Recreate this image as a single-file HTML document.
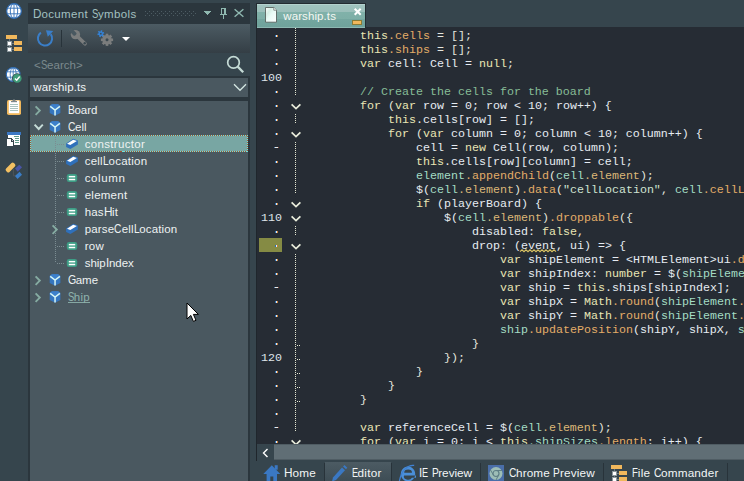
<!DOCTYPE html>
<html>
<head>
<meta charset="utf-8">
<title>warship.ts</title>
<style>
html,body{margin:0;padding:0;}
body{width:744px;height:481px;overflow:hidden;background:#36454d;position:relative;font-family:"Liberation Sans",sans-serif;font-size:11.5px;color:#e8eef0;}
.abs{position:absolute;}
svg{position:absolute;overflow:visible;}
/* left panel */
#title{left:28px;top:3px;width:222px;height:21px;background:#2b363d;}
#title .t{left:5px;top:4px;color:#a3c0c0;font-size:11.5px;line-height:14px;white-space:nowrap;}
#toolbar{left:28px;top:24px;width:222px;height:29px;background:linear-gradient(#4c5b63,#343e45);}
#search{left:34px;top:58px;color:#7c8a8d;font-size:11.5px;line-height:14px;white-space:nowrap;}
#combo{left:28px;top:76px;width:218px;height:19px;border:2px solid #2b363d;background:#4a5860;}
#combo .t{left:3.3px;top:2px;line-height:14px;color:#f2f5f5;white-space:nowrap;}
#tree{left:28px;top:99px;width:218px;height:390px;border:2px solid #2b363d;background:#4a5860;}
.row{position:absolute;left:0;width:218px;height:17px;}
.row .lbl{position:absolute;top:2px;line-height:15px;white-space:nowrap;color:#eef2f2;}
.sel{background:#78a6a3;}
.C{display:inline-block;font-size:12.4px;letter-spacing:0;}
.C>i{display:inline-block;font-style:normal;transform-origin:0 50%;}
/* editor */
#ed{left:257px;top:27px;width:487px;height:417px;background:#262c34;overflow:hidden;}
#edl{left:256px;top:27px;width:1px;height:434px;background:#1f262c;}
.ln{position:absolute;left:0;height:14px;line-height:14px;white-space:pre;font-family:"Liberation Mono",monospace;font-size:11.667px;color:#e4e6df;}
.num{position:absolute;left:4px;height:14px;line-height:14px;white-space:pre;font-family:"Liberation Mono",monospace;font-size:11.667px;color:#dfe5ea;}
.k{color:#e9e6b5;} /* keyword */
.m{color:#e3ad68;} /* member */
.p{color:#dcb878;}
.v{color:#a4dcc4;} /* variable */
.c{color:#86bd97;} /* comment */
.s{color:#cfe3d2;} /* string */
.w{color:#e6ecf2;}
.u{color:#e6ecf2;}
.dot{position:absolute;left:18px;width:3px;height:2px;background:linear-gradient(90deg,#2d6fb3 0,#2d6fb3 1px,#e4eaee 1px,#e4eaee 2px,#c97d35 2px);}
.dash{position:absolute;left:17px;width:5px;height:1px;background:linear-gradient(90deg,#5a86b8 0,#5a86b8 1px,#e9edea 1px,#e9edea 4px,#8c4a3a 4px);}
/* bottom */
#hs{left:257px;top:444px;width:487px;height:16px;background:#4f5c63;}
#hsb{left:257px;top:444px;width:17px;height:16px;background:#36454d;}
#tabs{left:257px;top:461px;width:487px;height:20px;background:#36454d;}
.bt{position:absolute;top:5px;line-height:14px;font-size:11.75px;color:#f2f5f5;white-space:nowrap;}
.sep{position:absolute;top:463px;width:1px;height:18px;background:#28333a;}
</style>
</head>
<body>
<svg width="16" height="16" style="left:6px;top:3px" viewBox="0 0 16 16">
<circle cx="8" cy="8" r="7.3" fill="#ffffff" stroke="#2f6db5" stroke-width="1.2"/>
<ellipse cx="8" cy="8" rx="3.7" ry="7.3" fill="none" stroke="#2f6db5" stroke-width="0.9"/>
<line x1="8" y1="0.8" x2="8" y2="15.2" stroke="#2f6db5" stroke-width="0.9"/>
<line x1="1.6" y1="5.2" x2="14.4" y2="5.2" stroke="#2f6db5" stroke-width="0.9"/>
<line x1="1.6" y1="10.8" x2="14.4" y2="10.8" stroke="#2f6db5" stroke-width="0.9"/>
</svg>
<svg width="24" height="20" style="left:0;top:32px" shape-rendering="crispEdges">
<path d="M9.5 7v13M9.5 11.5h5M9.5 17.5h5" stroke="#6d7a80" stroke-width="1" fill="none"/>
<rect x="6" y="3" width="11" height="4" fill="#f1b85c"/>
<rect x="14" y="9" width="8" height="4" fill="#f1b85c"/>
<rect x="14" y="15" width="8" height="4" fill="#f1b85c"/>
<rect x="7.5" y="9.5" width="4" height="4" fill="#ffffff" stroke="#8c989d"/>
<rect x="7.5" y="15.5" width="4" height="4" fill="#ffffff" stroke="#8c989d"/>
</svg>
<svg width="18" height="18" style="left:5px;top:66px" viewBox="0 0 18 18">
<circle cx="8.2" cy="8.5" r="6.9" fill="#ffffff" stroke="#2f6db5" stroke-width="1.1"/>
<ellipse cx="8.2" cy="8.5" rx="3" ry="6.9" fill="none" stroke="#2f6db5" stroke-width="0.8"/>
<line x1="8.2" y1="1.6" x2="8.2" y2="15.4" stroke="#2f6db5" stroke-width="0.8"/>
<line x1="2" y1="5.8" x2="14.4" y2="5.8" stroke="#2f6db5" stroke-width="0.8"/>
<line x1="2" y1="11.2" x2="14.4" y2="11.2" stroke="#2f6db5" stroke-width="0.8"/>
<circle cx="12.2" cy="12.4" r="5.2" fill="#36454d"/>
<circle cx="12.2" cy="12.4" r="4.4" fill="#3f9b78"/>
<polyline points="9.9,12.4 11.7,14.2 14.7,10.5" fill="none" stroke="#ffffff" stroke-width="1.4"/>
</svg>
<svg width="16" height="18" style="left:6px;top:98px" viewBox="0 0 16 18">
<rect x="1" y="2" width="14" height="15" rx="1.8" fill="#f1b85c"/>
<rect x="2.8" y="2.6" width="10.4" height="12.6" fill="#ffffff"/>
<path d="M5.3 3.8 L8 1 L10.7 3.8z" fill="#7d8587"/>
<rect x="5" y="3" width="6" height="1.2" fill="#7d8587"/>
<path d="M4 6.5h8M4 8.5h8M4 10.5h8M4 12.5h8" stroke="#a9c3bf" stroke-width="1"/>
</svg>
<svg width="18" height="18" style="left:5px;top:130px" viewBox="0 0 18 18" shape-rendering="crispEdges">
<rect x="2" y="2" width="14" height="3" fill="#3b78c4"/>
<rect x="3" y="5" width="12" height="10" fill="#ffffff"/>
<path d="M9 6.5h5M10 8.5h4M10 10.5h4M10 12.5h4" stroke="#5f9a8a" stroke-width="1"/>
<path d="M1.5 8.5h5l2 2v6h-7z" fill="#ffffff" stroke="#36454d" stroke-width="1"/>
<path d="M6 8.5v2.5h2.5" fill="#c8d2d2" stroke="#36454d" stroke-width="1"/>
</svg>
<svg width="24" height="20" style="left:0;top:160px" viewBox="0 0 24 20">
<path d="M13.4 9 V15.8 H15.6" fill="none" stroke="#4f5358" stroke-width="1"/>
<rect x="5" y="5.1" width="11" height="4.8" rx="1.7" transform="rotate(-45 10.5 7.5)" fill="#f3c062"/>
<path d="M15 8.5 L19.3 4.75 L22 7.25 L17.7 11.8z" fill="#4a55a6"/>
<path d="M15 16 L19.6 11.8 L22 14.75 L17.5 18.9z" fill="#3a7dc6"/>
</svg>
<div id="title" class="abs"><div class="t abs" style="letter-spacing:0.366px"><span class="C" style="width:8.41px"><i style="transform:scaleX(0.94)">D</i></span>ocument <span class="C" style="width:6.37px"><i style="transform:scaleX(0.77)">S</i></span>ymbols</div>
<svg width="222" height="21" style="left:0;top:0" shape-rendering="crispEdges"><g fill="#4d5c63"><rect x="117" y="8" width="1" height="1"/><rect x="121" y="8" width="1" height="1"/><rect x="125" y="8" width="1" height="1"/><rect x="129" y="8" width="1" height="1"/><rect x="133" y="8" width="1" height="1"/><rect x="137" y="8" width="1" height="1"/><rect x="141" y="8" width="1" height="1"/><rect x="145" y="8" width="1" height="1"/><rect x="149" y="8" width="1" height="1"/><rect x="153" y="8" width="1" height="1"/><rect x="157" y="8" width="1" height="1"/><rect x="161" y="8" width="1" height="1"/><rect x="165" y="8" width="1" height="1"/><rect x="119" y="10" width="1" height="1"/><rect x="123" y="10" width="1" height="1"/><rect x="127" y="10" width="1" height="1"/><rect x="131" y="10" width="1" height="1"/><rect x="135" y="10" width="1" height="1"/><rect x="139" y="10" width="1" height="1"/><rect x="143" y="10" width="1" height="1"/><rect x="147" y="10" width="1" height="1"/><rect x="151" y="10" width="1" height="1"/><rect x="155" y="10" width="1" height="1"/><rect x="159" y="10" width="1" height="1"/><rect x="163" y="10" width="1" height="1"/><rect x="167" y="10" width="1" height="1"/><rect x="117" y="12" width="1" height="1"/><rect x="121" y="12" width="1" height="1"/><rect x="125" y="12" width="1" height="1"/><rect x="129" y="12" width="1" height="1"/><rect x="133" y="12" width="1" height="1"/><rect x="137" y="12" width="1" height="1"/><rect x="141" y="12" width="1" height="1"/><rect x="145" y="12" width="1" height="1"/><rect x="149" y="12" width="1" height="1"/><rect x="153" y="12" width="1" height="1"/><rect x="157" y="12" width="1" height="1"/><rect x="161" y="12" width="1" height="1"/><rect x="165" y="12" width="1" height="1"/></g><path d="M175 8h8l-4 4z" fill="#8fb8b0"/><path d="M193.5 5v6M193 5.5h5M192 11.5h7M195.5 12v4" stroke="#8fb8b0" stroke-width="1" fill="none"/><rect x="196" y="5" width="2" height="6" fill="#8fb8b0"/></svg>
<svg width="222" height="21" style="left:0;top:0"><path d="M206.6 6.2l8.8 7.6M215.4 6.2l-8.8 7.6" stroke="#8fb8b0" stroke-width="1.4" fill="none"/></svg>
</div>
<div id="toolbar" class="abs">
<svg width="222" height="29" style="left:0;top:0">
<path d="M12.9 8.6 A7.1 7.1 0 1 0 22.7 10.1" fill="none" stroke="#3a7ec8" stroke-width="2"/>
<path d="M18 6.2 L25.3 7 L19.8 12.7z" fill="#3a7ec8"/>
<rect x="33" y="6" width="1" height="17" fill="#28333a"/>
<g fill="#7b7d7d" stroke="#7b7d7d">
<line x1="48.5" y1="11.5" x2="57" y2="19.8" stroke-width="3.6" stroke-linecap="round"/>
<circle cx="47.4" cy="10.6" r="4.7" stroke="none"/>
</g>
<rect x="39" y="8.7" width="8.8" height="3.8" rx="1.2" fill="#495860" transform="rotate(45 47.4 10.6)"/>
<circle cx="56.7" cy="19.3" r="1.2" fill="#39474f"/>
<g transform="translate(79 15.8)" fill="#7b7d7d">
<circle r="4.8"/>
<g><rect x="-1.3" y="-6.1" width="2.6" height="12.2"/><rect x="-6.1" y="-1.3" width="12.2" height="2.6"/>
<rect x="-1.3" y="-6.1" width="2.6" height="12.2" transform="rotate(45)"/><rect x="-1.3" y="-6.1" width="2.6" height="12.2" transform="rotate(-45)"/></g>
<circle r="1.5" fill="#3c4a51"/>
</g>
<g transform="translate(72.8 9.7)" fill="#3482d6">
<circle r="2.2"/>
<rect x="-0.8" y="-3.4" width="1.6" height="6.8" transform="rotate(15)"/><rect x="-0.8" y="-3.4" width="1.6" height="6.8" transform="rotate(75)"/><rect x="-0.8" y="-3.4" width="1.6" height="6.8" transform="rotate(135)"/>
<circle r="0.9" fill="#3f4e56"/>
</g>
<path d="M94 13h8l-4 4z" fill="#ffffff"/>
</svg>
</div>
<div id="search" class="abs" style="letter-spacing:0.005px">&lt;<span class="C" style="width:6.37px"><i style="transform:scaleX(0.77)">S</i></span>earch&gt;</div>
<svg width="22" height="22" style="left:225px;top:54px"><circle cx="8.5" cy="8.4" r="5.8" fill="none" stroke="#c5dbd6" stroke-width="1.7"/><path d="M12.7 12.6 L18.2 18.2" stroke="#c5dbd6" stroke-width="2.3" fill="none"/></svg>
<div id="combo" class="abs"><div class="t abs" style="letter-spacing:0.102px">warship.ts</div><svg width="16" height="18" style="left:200px;top:0"><polyline points="4,6.3 10,12.3 16,6.3" fill="none" stroke="#d4e6e2" stroke-width="1.3"/></svg></div>
<div id="tree" class="abs">
<div class="row" style="top:0px"><div class="lbl" style="left:37.5px;letter-spacing:0.023px"><span class="C" style="width:6.88px"><i style="transform:scaleX(0.831)">B</i></span>oard</div></div>
<div class="row" style="top:17px"><div class="lbl" style="left:37.5px;letter-spacing:0.088px"><span class="C" style="width:7.43px"><i style="transform:scaleX(0.83)">C</i></span>ell</div></div>
<div class="row sel" style="top:34px"><div class="lbl" style="left:54.7px;letter-spacing:0.331px">constructor</div></div>
<div class="row" style="top:51px"><div class="lbl" style="left:54.7px;letter-spacing:0.245px">cell<span class="C" style="width:5.65px"><i style="transform:scaleX(0.82)">L</i></span>ocation</div></div>
<div class="row" style="top:68px"><div class="lbl" style="left:54.7px;letter-spacing:0.604px">column</div></div>
<div class="row" style="top:85px"><div class="lbl" style="left:54.7px;letter-spacing:0.246px">element</div></div>
<div class="row" style="top:102px"><div class="lbl" style="left:54.7px;letter-spacing:0.118px">has<span class="C" style="width:8.52px"><i style="transform:scaleX(0.952)">H</i></span>it</div></div>
<div class="row" style="top:119px"><div class="lbl" style="left:54.7px;letter-spacing:0.153px">parse<span class="C" style="width:7.43px"><i style="transform:scaleX(0.83)">C</i></span>ell<span class="C" style="width:5.65px"><i style="transform:scaleX(0.82)">L</i></span>ocation</div></div>
<div class="row" style="top:136px"><div class="lbl" style="left:54.7px;letter-spacing:0.284px">row</div></div>
<div class="row" style="top:153px"><div class="lbl" style="left:54.7px;letter-spacing:-0.017px">ship<span class="C" style="width:3.19px"><i style="transform:scaleX(0.926)">I</i></span>ndex</div></div>
<div class="row" style="top:170px"><div class="lbl" style="left:37.5px;letter-spacing:-0.036px"><span class="C" style="width:8.24px"><i style="transform:scaleX(0.855)">G</i></span>ame</div></div>
<div class="row" style="top:187px"><div class="lbl" style="left:37.5px;letter-spacing:0.16px;color:#8fb2ad;background:linear-gradient(#86a8a3,#86a8a3) 0 12px/100% 1px no-repeat"><span class="C" style="width:6.37px"><i style="transform:scaleX(0.77)">S</i></span>hip</div></div>
<svg width="218" height="210" style="left:0;top:0"><g stroke="#7b8c91" stroke-width="1" stroke-dasharray="1 1" shape-rendering="crispEdges"><line x1="25.5" y1="34" x2="25.5" y2="162"/><line x1="27" y1="43.5" x2="35" y2="43.5"/><line x1="27" y1="60.5" x2="35" y2="60.5"/><line x1="27" y1="77.5" x2="35" y2="77.5"/><line x1="27" y1="94.5" x2="35" y2="94.5"/><line x1="27" y1="111.5" x2="35" y2="111.5"/><line x1="27" y1="145.5" x2="35" y2="145.5"/><line x1="27" y1="162.5" x2="35" y2="162.5"/></g><rect x="0.5" y="34.5" width="217" height="16" fill="none" stroke="#a8552f" stroke-width="1" shape-rendering="crispEdges"/><rect x="0.5" y="34.5" width="217" height="16" fill="none" stroke="#6fe2dc" stroke-width="1" stroke-dasharray="1 1" shape-rendering="crispEdges"/><g transform="translate(19.7 3.2)"><path d="M2.3 0 L8.4 0 L10.7 1.8 L10.7 8.8 L5.35 11.6 L0 8.8 L0 1.8z" fill="#3576bf"/><path d="M2.3 0 L8.4 0 L10.7 1.8 L5.35 5.6 L0 1.8z" fill="#3d80cb"/><path d="M0.5 2.1 L5.35 5.8 L10.2 2.1 M5.35 5.8 L5.35 11.4" stroke="#d6f6f6" stroke-width="1.5" fill="none"/></g><polyline points="5.6,5.3 9.8,9.6 5.6,13.9" fill="none" stroke="#86aba2" stroke-width="1.9"/><g transform="translate(19.7 20.2)"><path d="M2.3 0 L8.4 0 L10.7 1.8 L10.7 8.8 L5.35 11.6 L0 8.8 L0 1.8z" fill="#3576bf"/><path d="M2.3 0 L8.4 0 L10.7 1.8 L5.35 5.6 L0 1.8z" fill="#3d80cb"/><path d="M0.5 2.1 L5.35 5.8 L10.2 2.1 M5.35 5.8 L5.35 11.4" stroke="#d6f6f6" stroke-width="1.5" fill="none"/></g><polyline points="4.6,23.6 8.7,28.0 12.8,23.6" fill="none" stroke="#c6dcd8" stroke-width="1.9"/><g transform="translate(36 37.8)"><path d="M0.1 4.8 L7.2 0 L11.9 1.8 L11.9 5.6 L4.4 10.3 L0.1 8.2z" fill="#2f70bb"/><path d="M1 5 L7.2 0.9 L10.9 2.2 L4.3 6.2z" fill="#ffffff"/></g><g transform="translate(36 54.8)"><path d="M0.1 4.8 L7.2 0 L11.9 1.8 L11.9 5.6 L4.4 10.3 L0.1 8.2z" fill="#2f70bb"/><path d="M1 5 L7.2 0.9 L10.9 2.2 L4.3 6.2z" fill="#ffffff"/></g><g transform="translate(36.8 72.9)"><rect x="0" y="0" width="10.4" height="8.2" rx="2.4" fill="#3e9e86"/><rect x="2" y="2" width="6.4" height="1.5" fill="#fff"/><rect x="2" y="4.85" width="6.4" height="1.5" fill="#fff"/></g><g transform="translate(36.8 89.9)"><rect x="0" y="0" width="10.4" height="8.2" rx="2.4" fill="#3e9e86"/><rect x="2" y="2" width="6.4" height="1.5" fill="#fff"/><rect x="2" y="4.85" width="6.4" height="1.5" fill="#fff"/></g><g transform="translate(36.8 106.9)"><rect x="0" y="0" width="10.4" height="8.2" rx="2.4" fill="#3e9e86"/><rect x="2" y="2" width="6.4" height="1.5" fill="#fff"/><rect x="2" y="4.85" width="6.4" height="1.5" fill="#fff"/></g><g transform="translate(36 122.8)"><path d="M0.1 4.8 L7.2 0 L11.9 1.8 L11.9 5.6 L4.4 10.3 L0.1 8.2z" fill="#2f70bb"/><path d="M1 5 L7.2 0.9 L10.9 2.2 L4.3 6.2z" fill="#ffffff"/></g><polyline points="22.6,124.3 26.8,128.6 22.6,132.9" fill="none" stroke="#86aba2" stroke-width="1.9"/><g transform="translate(36.8 140.9)"><rect x="0" y="0" width="10.4" height="8.2" rx="2.4" fill="#3e9e86"/><rect x="2" y="2" width="6.4" height="1.5" fill="#fff"/><rect x="2" y="4.85" width="6.4" height="1.5" fill="#fff"/></g><g transform="translate(36.8 157.9)"><rect x="0" y="0" width="10.4" height="8.2" rx="2.4" fill="#3e9e86"/><rect x="2" y="2" width="6.4" height="1.5" fill="#fff"/><rect x="2" y="4.85" width="6.4" height="1.5" fill="#fff"/></g><g transform="translate(19.7 173.2)"><path d="M2.3 0 L8.4 0 L10.7 1.8 L10.7 8.8 L5.35 11.6 L0 8.8 L0 1.8z" fill="#3576bf"/><path d="M2.3 0 L8.4 0 L10.7 1.8 L5.35 5.6 L0 1.8z" fill="#3d80cb"/><path d="M0.5 2.1 L5.35 5.8 L10.2 2.1 M5.35 5.8 L5.35 11.4" stroke="#d6f6f6" stroke-width="1.5" fill="none"/></g><polyline points="5.6,175.3 9.8,179.6 5.6,183.9" fill="none" stroke="#86aba2" stroke-width="1.9"/><g transform="translate(19.7 190.2)"><path d="M2.3 0 L8.4 0 L10.7 1.8 L10.7 8.8 L5.35 11.6 L0 8.8 L0 1.8z" fill="#3576bf"/><path d="M2.3 0 L8.4 0 L10.7 1.8 L5.35 5.6 L0 1.8z" fill="#3d80cb"/><path d="M0.5 2.1 L5.35 5.8 L10.2 2.1 M5.35 5.8 L5.35 11.4" stroke="#d6f6f6" stroke-width="1.5" fill="none"/></g><polyline points="5.6,192.3 9.8,196.6 5.6,200.9" fill="none" stroke="#86aba2" stroke-width="1.9"/></svg>
</div>
<svg width="14" height="22" style="left:185.5px;top:302px"><path d="M1 1 L1 17 L4.8 13.4 L7.4 19.4 L10 18.3 L7.4 12.4 L12.4 12.4z" fill="#ffffff" stroke="#000000" stroke-width="1"/></svg>
<div id="edl" class="abs"></div>
<div id="ed" class="abs">
<div class="abs" style="left:2px;top:211px;width:23px;height:14px;background:#858b44"></div>
<div class="dot" style="top:8px"></div>
<div class="ln" style="left:103px;top:2px"><span class="k">this</span><span class="m">.cells</span> = [];</div>
<div class="dot" style="top:22px"></div>
<div class="ln" style="left:103px;top:16px"><span class="k">this</span><span class="m">.ships</span> = [];</div>
<div class="dot" style="top:36px"></div>
<div class="ln" style="left:103px;top:30px"><span class="k">var</span><span class="w"> cell: Cell = </span><span class="k">null</span>;</div>
<div class="num" style="top:44px">100</div>
<div class="dot" style="top:64px"></div>
<div class="ln" style="left:103px;top:58px"><span class="c">// Create the cells for the board</span></div>
<div class="dot" style="top:78px"></div>
<div class="ln" style="left:103px;top:72px"><span class="k">for</span> (<span class="k">var</span><span class="w"> row = 0; row &lt; 10; row++) {</span></div>
<div class="dot" style="top:92px"></div>
<div class="ln" style="left:131px;top:86px"><span class="k">this</span><span class="w">.cells[row] = [];</span></div>
<div class="dot" style="top:106px"></div>
<div class="ln" style="left:131px;top:100px"><span class="k">for</span> (<span class="k">var</span><span class="w"> column = 0; column &lt; 10; column++) {</span></div>
<div class="dash" style="top:120px"></div>
<div class="ln" style="left:159px;top:114px"><span class="w">cell = </span><span class="k">new</span><span class="w"> Cell(row, column);</span></div>
<div class="dot" style="top:134px"></div>
<div class="ln" style="left:159px;top:128px"><span class="k">this</span><span class="w">.cells[row][column] = cell;</span></div>
<div class="dot" style="top:148px"></div>
<div class="ln" style="left:159px;top:142px"><span class="v">element</span><span class="m">.appendChild</span>(<span class="v">cell</span><span class="p">.element</span>);</div>
<div class="dot" style="top:162px"></div>
<div class="ln" style="left:159px;top:156px"><span class="w">$(</span><span class="v">cell</span><span class="p">.element</span>)<span class="m">.data</span>(<span class="s">"cellLocation"</span>, <span class="v">cell</span><span class="m">.cellLocation</span>);</div>
<div class="dot" style="top:176px"></div>
<div class="ln" style="left:159px;top:170px"><span class="k">if</span><span class="w"> (playerBoard) {</span></div>
<div class="num" style="top:184px">110</div>
<div class="ln" style="left:187px;top:184px"><span class="w">$(</span><span class="v">cell</span><span class="p">.element</span>)<span class="m">.droppable</span>({</div>
<div class="dot" style="top:204px"></div>
<div class="ln" style="left:215px;top:198px"><span class="w">disabled: </span><span class="k">false</span>,</div>
<div class="dot" style="top:218px"></div>
<div class="ln" style="left:215px;top:212px"><span class="w">drop: (</span><span class="u">event</span><span class="w">, ui) =&gt; {</span></div>
<div class="dot" style="top:232px"></div>
<div class="ln" style="left:243px;top:226px"><span class="k">var</span><span class="w"> shipElement = &lt;HTMLElement&gt;ui</span><span class="m">.draggable</span>[0];</div>
<div class="dot" style="top:246px"></div>
<div class="ln" style="left:243px;top:240px"><span class="k">var</span><span class="w"> shipIndex: </span><span class="k">number</span><span class="w"> = $(</span><span class="v">shipElement</span>)<span class="m">.data</span>("shipIndex");</div>
<div class="dash" style="top:260px"></div>
<div class="ln" style="left:243px;top:254px"><span class="k">var</span><span class="w"> ship = </span><span class="k">this</span><span class="w">.ships[shipIndex];</span></div>
<div class="dot" style="top:274px"></div>
<div class="ln" style="left:243px;top:268px"><span class="k">var</span><span class="w"> shipX = </span><span class="k">Math</span><span class="m">.round</span>(<span class="v">shipElement</span><span class="m">.offsetLeft</span> / 23);</div>
<div class="dot" style="top:288px"></div>
<div class="ln" style="left:243px;top:282px"><span class="k">var</span><span class="w"> shipY = </span><span class="k">Math</span><span class="m">.round</span>(<span class="v">shipElement</span><span class="m">.offsetTop</span> / 23);</div>
<div class="dot" style="top:302px"></div>
<div class="ln" style="left:243px;top:296px"><span class="v">ship</span><span class="m">.updatePosition</span><span class="w">(shipY, shipX, </span><span class="v">ship</span><span class="m">.isVertical</span>);</div>
<div class="dot" style="top:316px"></div>
<div class="ln" style="left:215px;top:310px">}</div>
<div class="num" style="top:324px">120</div>
<div class="ln" style="left:187px;top:324px">});</div>
<div class="dot" style="top:344px"></div>
<div class="ln" style="left:159px;top:338px">}</div>
<div class="dot" style="top:358px"></div>
<div class="ln" style="left:131px;top:352px">}</div>
<div class="dot" style="top:372px"></div>
<div class="ln" style="left:103px;top:366px">}</div>
<div class="dot" style="top:386px"></div>
<div class="dash" style="top:400px"></div>
<div class="ln" style="left:103px;top:394px"><span class="k">var</span><span class="w"> referenceCell = $(</span><span class="v">cell</span><span class="p">.element</span>);</div>
<div class="dot" style="top:414px"></div>
<div class="ln" style="left:103px;top:408px"><span class="k">for</span> (<span class="k">var</span><span class="w"> i = 0; i &lt; </span><span class="k">this</span><span class="v">.shipSizes</span><span class="m">.length</span><span class="w">; i++) {</span></div>
<svg width="20" height="420" style="left:30px;top:0" shape-rendering="crispEdges"><line x1="8.5" y1="1" x2="8.5" y2="68" stroke="#e3e6d0" stroke-width="1" stroke-dasharray="1 1"/><line x1="8.5" y1="87" x2="8.5" y2="96" stroke="#e3e6d0" stroke-width="1" stroke-dasharray="1 1"/><line x1="8.5" y1="115" x2="8.5" y2="166" stroke="#e3e6d0" stroke-width="1" stroke-dasharray="1 1"/><line x1="8.5" y1="199" x2="8.5" y2="208" stroke="#e3e6d0" stroke-width="1" stroke-dasharray="1 1"/><line x1="8.5" y1="227" x2="8.5" y2="404" stroke="#e3e6d0" stroke-width="1" stroke-dasharray="1 1"/><line x1="10" y1="318.5" x2="13" y2="318.5" stroke="#e3e6d0" stroke-width="1" stroke-dasharray="1 1"/><line x1="10" y1="332.5" x2="13" y2="332.5" stroke="#e3e6d0" stroke-width="1" stroke-dasharray="1 1"/><line x1="10" y1="346.5" x2="13" y2="346.5" stroke="#e3e6d0" stroke-width="1" stroke-dasharray="1 1"/><line x1="10" y1="360.5" x2="13" y2="360.5" stroke="#e3e6d0" stroke-width="1" stroke-dasharray="1 1"/><line x1="10" y1="374.5" x2="13" y2="374.5" stroke="#e3e6d0" stroke-width="1" stroke-dasharray="1 1"/></svg>
<svg width="20" height="420" style="left:30px;top:0"><polyline points="4.6,413.3 9,417.6 13.4,413.3" fill="none" stroke="#e9eddc" stroke-width="1.7"/><polyline points="4.6,77.3 9,81.6 13.4,77.3" fill="none" stroke="#e9eddc" stroke-width="1.7"/><polyline points="4.6,105.3 9,109.6 13.4,105.3" fill="none" stroke="#e9eddc" stroke-width="1.7"/><polyline points="4.6,175.29999999999998 9,179.6 13.4,175.29999999999998" fill="none" stroke="#e9eddc" stroke-width="1.7"/><polyline points="4.6,189.29999999999998 9,193.6 13.4,189.29999999999998" fill="none" stroke="#e9eddc" stroke-width="1.7"/><polyline points="4.6,217.29999999999998 9,221.6 13.4,217.29999999999998" fill="none" stroke="#e9eddc" stroke-width="1.7"/></svg>
<svg width="487" height="417" style="left:0;top:0"><polyline points="263,224.7 265,222.8 267,224.7 269,222.8 271,224.7 273,222.8 275,224.7 277,222.8 279,224.7 281,222.8 283,224.7 285,222.8 287,224.7 289,222.8 291,224.7 293,222.8 295,224.7 297,222.8 299,224.7" fill="none" stroke="#dcc564" stroke-width="1.1"/></svg>
</div>
<div class="abs" style="left:256px;top:3px;width:110px;height:25px;background:#222b31"></div>
<div class="abs" style="left:257px;top:4px;width:108px;height:24px;background:linear-gradient(#b3d1cd 0,#b3d1cd 1px,#a0c3bf 1px,#9bbfba 8.5px,#80b1a9 8.5px,#7eafa7 15px,#74a69f 15px,#6fa29b 23px,#8db8b2 23px)"></div>
<svg width="14" height="18" style="left:264px;top:6px"><defs><linearGradient id="dg" x1="0" y1="0" x2="1" y2="1"><stop offset="0" stop-color="#ffffff"/><stop offset="0.3" stop-color="#d9f0e6"/><stop offset="0.5" stop-color="#e9fbf6"/><stop offset="1" stop-color="#ffffff"/></linearGradient></defs><path d="M1.5 1.5 L9.8 1.5 L12.5 4.2 L12.5 16.2 L1.5 16.2z" fill="url(#dg)" stroke="#58635f" stroke-width="0.9"/><path d="M9.8 1.5 L9.8 4.2 L12.5 4.2" fill="#ffffff" stroke="#58635f" stroke-width="0.7"/></svg>
<div class="abs" style="left:283.3px;top:9px;line-height:14px;font-size:11.5px;color:#f4f7f3;white-space:nowrap;letter-spacing:0.091px" id="tabt">warship.ts</div>
<svg width="12" height="20" style="left:351px;top:6px"><path d="M3.7 2.7 L9.7 8.7 M9.7 2.7 L3.7 8.7" stroke="#ffffff" stroke-width="2" fill="none"/><rect x="1.5" y="14.5" width="9" height="4" fill="#f1b85c" stroke="#8b7c34" stroke-width="1"/></svg>
<div id="hs" class="abs"><div class="abs" style="left:0;top:1px;width:487px;height:14px;background:#606e75"></div></div><div id="hsb" class="abs"><svg width="17" height="17" style="left:0;top:0"><polyline points="10.5,5 6.5,9 10.5,13" fill="none" stroke="#ffffff" stroke-width="1.4"/></svg></div>
<div id="tabs" class="abs">
<div class="abs" style="left:68px;top:1px;width:66px;height:19px;background:linear-gradient(#4c5b63,#3e4d55)"></div>
<svg width="18" height="18" style="left:5.5px;top:3px"><path d="M0.3 10 L8.8 1.2 L17.3 10 L14 10 L14 18 L10.3 18 L10.3 12.5 L7.3 12.5 L7.3 18 L3.6 18 L3.6 10z" fill="#3a78c3"/><rect x="11.7" y="1.2" width="3" height="4.5" fill="#3a78c3"/></svg>
<div class="bt" style="left:27px;letter-spacing:0.208px"><span class="C" style="width:8.52px"><i style="transform:scaleX(0.952)">H</i></span>ome</div>
<svg width="18" height="18" style="left:73px;top:3px"><path d="M2 17.5 L3 13.5 L12 3.5 L15 6.3 L6 16z" fill="#3a78c3"/><path d="M13 2.5 L14.5 1 L17.3 3.7 L16 5.2z" fill="#3a78c3"/></svg>
<div class="bt" style="left:94.5px;letter-spacing:0.276px"><span class="C" style="width:6.07px"><i style="transform:scaleX(0.734)">E</i></span>ditor</div>
<svg width="18" height="18" style="left:141px;top:3px"><path d="M10 2.6 a7.2 7.4 0 1 0 0.01 0z M6.2 8.7 a3.9 3.3 0 0 1 7.8 0z M6.2 11.5 H18 V13.7 H13.9 a3.9 2.9 0 0 1 -7.7 -2.2z" fill="#4a8fd8" fill-rule="evenodd"/><path d="M16.2 1.4 C10 0.5 3.5 6 1.4 17" fill="none" stroke="#3f80d0" stroke-width="1.2"/></svg>
<div class="bt" style="left:162px;letter-spacing:-0.024px"><span class="C" style="width:3.19px"><i style="transform:scaleX(0.926)">I</i></span><span class="C" style="width:6.07px"><i style="transform:scaleX(0.734)">E</i></span> <span class="C" style="width:6.74px"><i style="transform:scaleX(0.815)">P</i></span>review</div>
<svg width="16" height="17" style="left:231px;top:4px"><rect x="0" y="0" width="16" height="17" fill="#4a6ea9"/><circle cx="8" cy="8.5" r="6.5" fill="#9dbdb6"/><circle cx="8" cy="8.5" r="3" fill="#9dbdb6" stroke="#5f7f86" stroke-width="1.2"/><path d="M8 5.5h6M5.4 10 L2.5 5M10.6 10 L8 15" stroke="#5f7f86" stroke-width="1" fill="none"/></svg>
<div class="bt" style="left:251.6px;letter-spacing:0.123px"><span class="C" style="width:7.43px"><i style="transform:scaleX(0.83)">C</i></span>hrome <span class="C" style="width:6.74px"><i style="transform:scaleX(0.815)">P</i></span>review</div>
<svg width="18" height="18" style="left:354px;top:3px" shape-rendering="crispEdges">
<path d="M3.5 5v13M3.5 9.5h5M3.5 15.5h5" stroke="#6d7a80" stroke-width="1" fill="none"/>
<rect x="0" y="1" width="11" height="4" fill="#f1b85c"/><rect x="8" y="7" width="8" height="4" fill="#f1b85c"/><rect x="8" y="13" width="8" height="4" fill="#f1b85c"/>
<rect x="1.5" y="7.5" width="4" height="4" fill="#fff" stroke="#8c989d"/><rect x="1.5" y="13.5" width="4" height="4" fill="#fff" stroke="#8c989d"/></svg>
<div class="bt" style="left:375px;letter-spacing:0.178px"><span class="C" style="width:5.86px"><i style="transform:scaleX(0.773)">F</i></span>ile <span class="C" style="width:7.43px"><i style="transform:scaleX(0.83)">C</i></span>ommander</div>
</div>
<div class="sep" style="left:324px"></div>
<div class="sep" style="left:391px"></div>
<div class="sep" style="left:480px"></div>
<div class="sep" style="left:603px"></div>
<div class="sep" style="left:727px"></div>
</body>
</html>
